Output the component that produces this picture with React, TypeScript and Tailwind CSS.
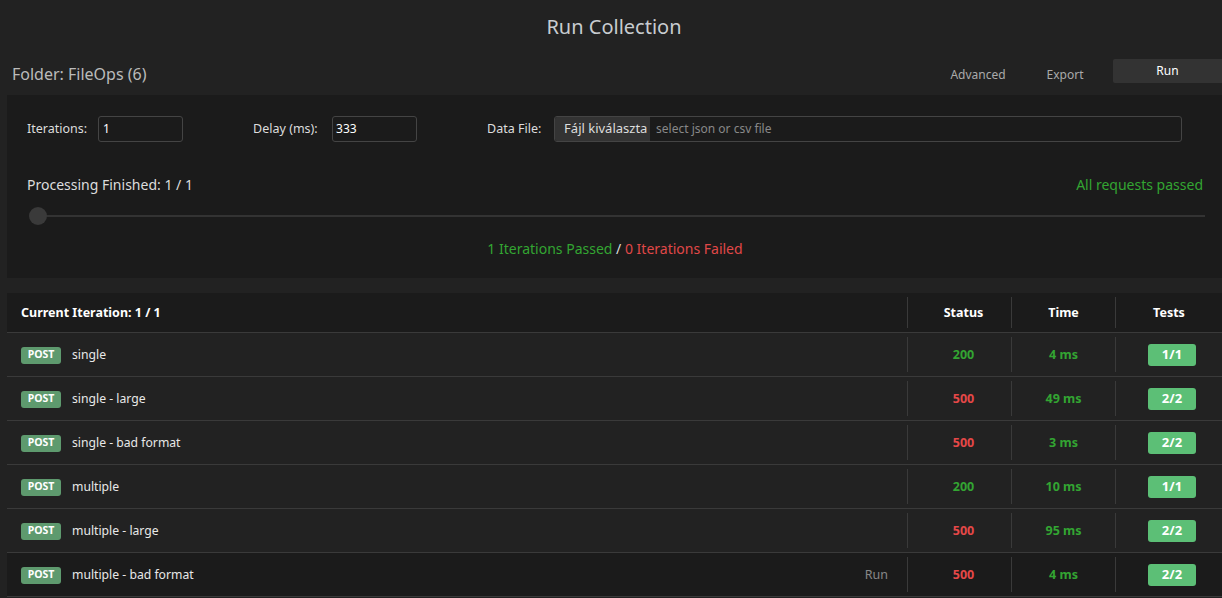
import React from "react";

const rows = [
  { name: "single", status: 200, time: "4 ms", tests: "1/1" },
  { name: "single - large", status: 500, time: "49 ms", tests: "2/2" },
  { name: "single - bad format", status: 500, time: "3 ms", tests: "2/2" },
  { name: "multiple", status: 200, time: "10 ms", tests: "1/1" },
  { name: "multiple - large", status: 500, time: "95 ms", tests: "2/2" },
  { name: "multiple - bad format", status: 500, time: "4 ms", tests: "2/2", hover: true },
];

export default function App() {
  return (
    <div
      className="w-[1222px] h-[598px] overflow-hidden bg-[#222222] text-[#dddddd]"
      style={{ fontFamily: '"Segoe UI", "Noto Sans", sans-serif' }}
    >
      <div className="h-[54px] flex items-center justify-center text-[20px] text-[#c8ccd0] pl-[6px]">
        Run Collection
      </div>
      <div className="h-[41px] flex items-start">
        <div className="pl-[12px] pt-[8px] text-[16px] text-[#bbbbbb] flex-1">Folder: FileOps (6)</div>
        <div className="flex items-start pt-[5px]">
          <div className="w-[74px] text-center pt-[7px] text-[12px] text-[#aaaaaa] mr-[22px]">Advanced</div>
          <div className="w-[56px] text-center pt-[7px] text-[12px] text-[#aaaaaa] mr-[20px]">Export</div>
          <div className="w-[109px] h-[24px] bg-[#333333] text-[12px] text-white flex items-center justify-center rounded-l-[2px]">
            Run
          </div>
        </div>
      </div>
      <div className="ml-[7px] h-[183px] bg-[#1b1b1b] pl-[20px] pr-[19px] pt-[21px]">
        <div className="flex items-center h-[26px] text-[12.5px]">
          <span className="text-[#dddddd] pt-[1px]">Iterations:</span>
          <div className="ml-[11px] w-[85px] h-[26px] border border-[#444444] rounded-[3px] flex items-center pl-[4px] text-[12px] text-white">1</div>
          <span className="ml-[70px] w-[68px] pt-[1px]">Delay (ms):</span>
          <div className="ml-[11px] w-[85px] h-[26px] border border-[#444444] rounded-[3px] flex items-center pl-[3px] text-[12px] text-white">333</div>
          <span className="ml-[70px] w-[57px] pt-[1px]">Data File:</span>
          <div className="ml-[10px] w-[628px] h-[26px] border border-[#444444] rounded-[3px] flex items-center overflow-hidden">
            <div className="w-[95px] shrink-0 h-full bg-[#333333] text-[13px] text-[#dddddd] flex items-center pl-[9px] whitespace-nowrap overflow-hidden">Fájl kiválaszta</div>
            <div className="pl-[6px] text-[12px] text-[#888888]">select json or csv file</div>
          </div>
        </div>
        <div className="flex justify-between mt-[31px] text-[14px] h-[22px] items-center">
          <span>Processing Finished: 1 / 1</span>
          <span className="text-[#33a532]">All requests passed</span>
        </div>
        <div className="relative h-[18px] mt-[12px] ml-[3px] -mr-[2px]">
          <div className="absolute left-0 right-0 top-[8px] h-[2px] bg-[#333333]" />
          <div className="absolute left-[-1px] top-0 w-[18px] h-[18px] rounded-full bg-[#3a3a3a]" />
        </div>
        <div className="mt-[13px] text-center text-[14px]">
          <span className="text-[#33a532]">1 Iterations Passed</span>
          <span className="text-[#dddddd]"> / </span>
          <span className="text-[#e04848]">0 Iterations Failed</span>
        </div>
      </div>
      <div className="ml-[7px] mt-[15px]">
        <div className="flex h-[40px] bg-[#1b1b1b] border-b border-[#3a3a3a] text-[12.5px] font-bold text-white">
          <div className="flex-1 flex items-center pl-[14px] pt-[2px]">Current Iteration: 1 / 1</div>
          <div className="w-[104px] flex items-center justify-center border-l border-[#3a3a3a] my-[4px] pl-[8px] pt-[2px]">Status</div>
          <div className="w-[104px] flex items-center justify-center border-l border-[#3a3a3a] my-[4px] pt-[2px]">Time</div>
          <div className="w-[107px] flex items-center justify-center border-l border-[#3a3a3a] my-[4px] pt-[2px]">Tests</div>
        </div>
        {rows.map((r) => (
          <div
            key={r.name}
            className={`flex h-[44px] border-b border-[#3a3a3a] text-[12.5px] ${r.hover ? "bg-[#1b1b1b]" : "bg-[#222222]"}`}
          >
            <div className="flex-1 flex items-center pl-[14px] pt-[1px]">
              <span className="h-[17px] w-[40px] rounded-[3px] bg-[#5e9a6e] text-white text-[10.5px] font-bold flex items-center justify-center">POST</span>
              <span className="ml-[11px] text-[#e8e8e8] text-[12.2px] pt-[1px]">{r.name}</span>
              <span className="flex-1" />
              {r.hover && <span className="mr-[19px] text-[#888888] pt-[1px]">Run</span>}
            </div>
            <div className={`w-[104px] flex items-center justify-center border-l border-[#3a3a3a] my-[4px] pl-[8px] pt-[2px] font-bold ${r.status === 200 ? "text-[#33a532]" : "text-[#e54848]"}`}>
              {r.status}
            </div>
            <div className="w-[104px] flex items-center justify-center border-l border-[#3a3a3a] my-[4px] pt-[2px] font-bold text-[#33a532]">
              {r.time}
            </div>
            <div className="w-[107px] flex items-center justify-center border-l border-[#3a3a3a] my-[4px] pl-[6px] pt-[1px]">
              <span className="w-[48px] h-[22px] rounded-[3px] bg-[#5cbf76] text-white font-bold text-[13px] flex items-center justify-center">{r.tests}</span>
            </div>
          </div>
        ))}
      </div>
    </div>
  );
}
